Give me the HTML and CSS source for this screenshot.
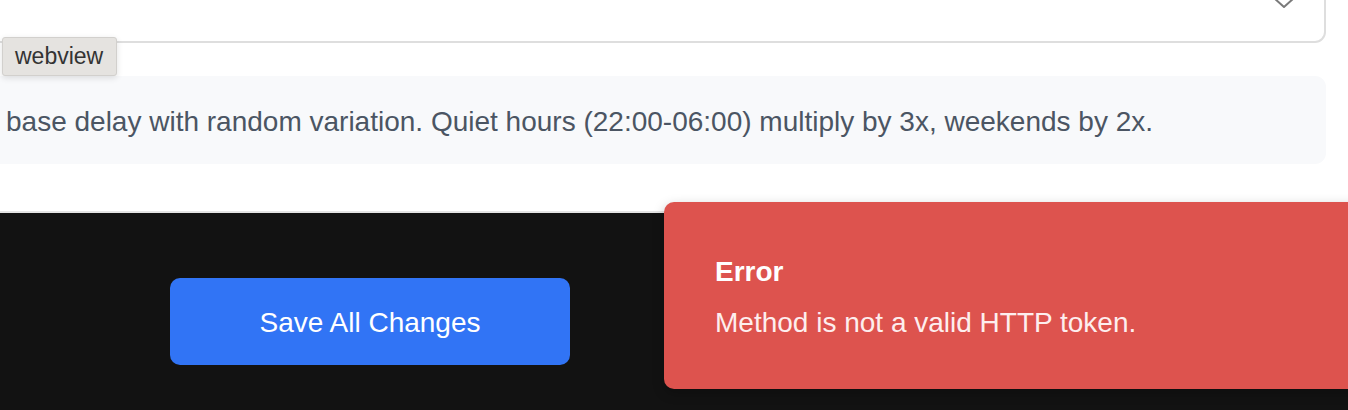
FILE: index.html
```html
<!DOCTYPE html>
<html lang="en">
<head>
<meta charset="utf-8">
<title>Settings</title>
<link rel="stylesheet" href="styles.css">
</head>
<body>
<div class="page">
  <section class="panel">
    <div class="select">
      <svg class="chevron" width="22" height="12" viewBox="0 0 22 12" aria-hidden="true">
        <path d="M1 1 L11 10 L21 1" fill="none" stroke="#7a7a7a" stroke-width="2" stroke-linecap="round" stroke-linejoin="round"/>
      </svg>
    </div>
    <div class="note">base delay with random variation. Quiet hours (22:00-06:00) multiply by 3x, weekends by 2x.</div>
  </section>
  <footer class="footer">
    <button class="save">Save All Changes</button>
  </footer>
  <div class="tooltip">webview</div>
  <div class="toast">
    <div class="toast-title">Error</div>
    <div class="toast-msg">Method is not a valid HTTP token.</div>
  </div>
</div>
</body>
</html>
```

FILE: styles.css
```css
html, body {
  margin: 0;
  padding: 0;
  background: #ffffff;
}
body {
  font-family: "Liberation Sans", Arial, Helvetica, sans-serif;
  width: 1348px;
  height: 410px;
  overflow: hidden;
}
.page {
  position: relative;
  width: 1348px;
  height: 410px;
  overflow: hidden;
}
.panel {
  display: flow-root;
  box-sizing: border-box;
  height: 213px;
  padding-right: 22px;
  border-bottom: 2px solid #e4e4e4;
  background: #ffffff;
}
.select {
  box-sizing: border-box;
  height: 62px;
  margin-top: -19px;
  margin-left: -20px;
  border: 2px solid #dedede;
  border-radius: 11px;
  background: #ffffff;
  display: flex;
  justify-content: flex-end;
  align-items: flex-start;
  padding-right: 29px;
}
.chevron {
  display: block;
  margin-top: 14px;
}
.note {
  box-sizing: border-box;
  height: 88px;
  margin-top: 33px;
  margin-left: -20px;
  padding: 30px 0 0 26px;
  background: #f8f9fb;
  border-radius: 11px;
  color: #4b5563;
  font-size: 28px;
  line-height: 32px;
  white-space: nowrap;
}
.footer {
  box-sizing: border-box;
  height: 197px;
  background: #121212;
  padding: 65px 0 0 170px;
}
.save {
  display: block;
  width: 400px;
  height: 87px;
  padding: 2px 0 0 0;
  border: none;
  border-radius: 10px;
  background: #3174f5;
  color: #ffffff;
  font-family: "Liberation Sans", Arial, Helvetica, sans-serif;
  font-size: 28px;
}
.tooltip {
  position: absolute;
  left: 2px;
  top: 37px;
  box-sizing: border-box;
  width: 115px;
  height: 39px;
  padding-left: 12px;
  background: #e5e3e0;
  border: 1px solid #d2d0cd;
  border-radius: 3px;
  box-shadow: 0 2px 6px rgba(0, 0, 0, 0.12);
  color: #333333;
  font-size: 23px;
  line-height: 37px;
}
.toast {
  position: absolute;
  left: 664px;
  top: 202px;
  box-sizing: border-box;
  width: 720px;
  height: 187px;
  padding: 54px 0 0 51px;
  background: #dd534e;
  border-radius: 10px;
  box-shadow: 0 4px 12px rgba(0, 0, 0, 0.25);
  color: #ffffff;
}
.toast-title {
  font-size: 28px;
  line-height: 32px;
  font-weight: bold;
}
.toast-msg {
  margin-top: 19px;
  font-size: 28px;
  line-height: 32px;
  color: #fdeeee;
}
```
